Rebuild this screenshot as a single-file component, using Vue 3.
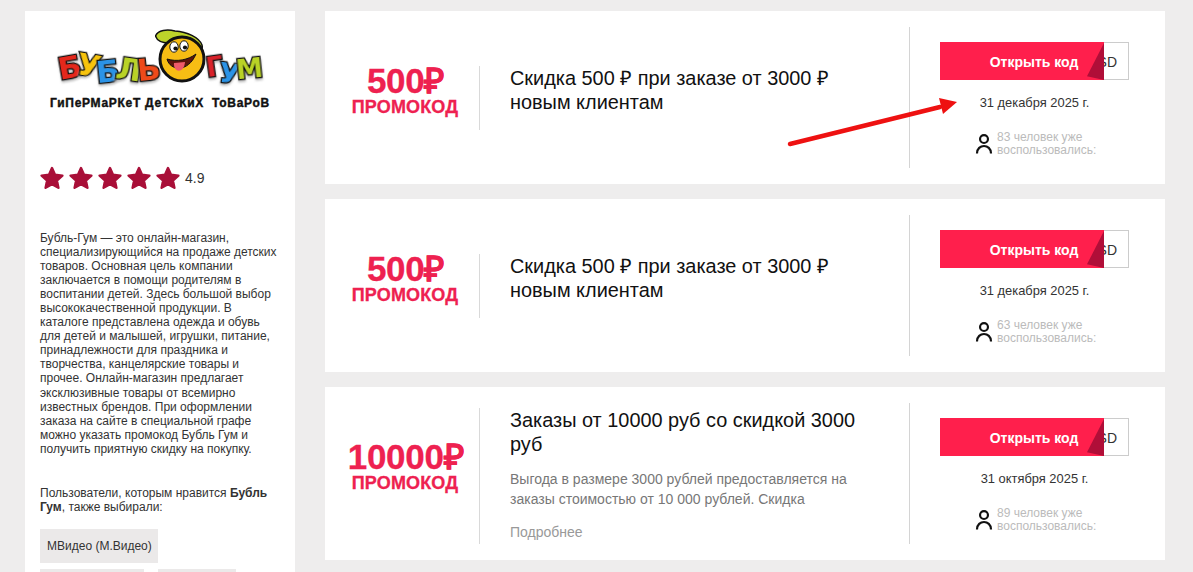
<script setup>
const desc = [
  'Бубль-Гум — это онлайн-магазин,',
  'специализирующийся на продаже детских',
  'товаров. Основная цель компании',
  'заключается в помощи родителям в',
  'воспитании детей. Здесь большой выбор',
  'высококачественной продукции. В',
  'каталоге представлена одежда и обувь',
  'для детей и малышей, игрушки, питание,',
  'принадлежности для праздника и',
  'творчества, канцелярские товары и',
  'прочее. Онлайн-магазин предлагает',
  'эксклюзивные товары от всемирно',
  'известных брендов. При оформлении',
  'заказа на сайте в специальной графе',
  'можно указать промокод Бубль Гум и',
  'получить приятную скидку на покупку.'
]
const logoLeft = [
  { c: 'Б', color: '#e4281c', r: -10, y: 0 },
  { c: 'У', color: '#f7c30c', r: 10, y: -2 },
  { c: 'Б', color: '#2b93e6', r: -6, y: 4 },
  { c: 'Л', color: '#b9d226', r: 8, y: 2 },
  { c: 'Ь', color: '#ee4a1a', r: -6, y: 2 }
]
const logoRight = [
  { c: 'Г', color: '#d8222a', r: -8, y: -2 },
  { c: 'У', color: '#2b93e6', r: 8, y: 5 },
  { c: 'М', color: '#b9d226', r: -6, y: 0 }
]
const coupons = [
  { amount: '500₽', title: ['Скидка 500 ₽ при заказе от 3000 ₽', 'новым клиентам'], date: '31 декабря 2025 г.', used: 83 },
  { amount: '500₽', title: ['Скидка 500 ₽ при заказе от 3000 ₽', 'новым клиентам'], date: '31 декабря 2025 г.', used: 63 },
  {
    amount: '10000₽',
    title: ['Заказы от 10000 руб со скидкой 3000', 'руб'],
    text: ['Выгода в размере 3000 рублей предоставляется на', 'заказы стоимостью от 10 000 рублей. Скидка'],
    more: 'Подробнее',
    date: '31 октября 2025 г.',
    used: 89
  }
]
const letterStyle = (l) => ({ color: l.color, transform: `translateY(${l.y}px) rotate(${l.r}deg)` })
</script>

<template>
  <div class="page">
    <aside class="side">
      <div class="logo">
        <div class="logo-row">
          <span v-for="(l, i) in logoLeft" :key="i" class="logo-l" :style="letterStyle(l)">{{ l.c }}</span>
          <svg class="smiley" width="52" height="56" viewBox="0 0 52 56">
            <path d="M0.5 7 C3 1 12 0 20 2 C32 3 44 8 47 16 C48 20 46 23 43 24 L14 14 C8 14 2 12 .5 7 Z" fill="#bdd32a" stroke="#111" stroke-width="1.5"/>
            <circle cx="27" cy="30" r="22" fill="#f7bd14" stroke="#111" stroke-width="3"/>
            <ellipse cx="19" cy="18" rx="4.2" ry="5.2" fill="#fff" stroke="#111"/>
            <ellipse cx="29" cy="17" rx="4.2" ry="5.2" fill="#fff" stroke="#111"/>
            <circle cx="20.5" cy="19.5" r="2.1" fill="#111"/>
            <circle cx="30" cy="18.5" r="2.1" fill="#111"/>
            <path d="M12 30 C15 42 33 44 41 25 C33 31 22 33 12 30 Z" fill="#5c140c" stroke="#111"/>
            <path d="M19 34 C18 44 29 45 30 33 Z" fill="#ee5a6a"/>
          </svg>
          <span v-for="(l, i) in logoRight" :key="i" class="logo-l logo-s" :style="letterStyle(l)">{{ l.c }}</span>
        </div>
        <div class="logo-sub">ГиПеРМаРКеТ ДеТСКиХ&nbsp; ТоВаРоВ</div>
      </div>
      <div class="rating">
        <svg v-for="i in 5" :key="i" class="star" width="24" height="24" viewBox="0 0 24 24">
          <path d="M12 2 L15 8.8 L22.4 9.6 L16.9 14.6 L18.4 21.8 L12 18.1 L5.6 21.8 L7.1 14.6 L1.6 9.6 L9 8.8 Z" fill="#a90f38" stroke="#a90f38" stroke-width="2.4" stroke-linejoin="round"/>
        </svg>
        <span class="score">4.9</span>
      </div>
      <p class="desc"><template v-for="line in desc" :key="line">{{ line }}<br></template></p>
      <p class="also">Пользователи, которым нравится <b>Бубль<br>Гум</b>, также выбирали:</p>
      <div class="chips">
        <span class="chip chip-a">МВидео (М.Видео)</span>
        <span class="chip chip-b"></span>
        <span class="chip chip-c"></span>
      </div>
    </aside>
    <main class="list">
      <article v-for="(c, i) in coupons" :key="i" class="card">
        <div class="amount-col">
          <div class="amount">{{ c.amount }}</div>
          <div class="promo">ПРОМОКОД</div>
        </div>
        <div class="body" :class="{ tall: c.text }">
          <h2 class="title">{{ c.title[0] }}<br>{{ c.title[1] }}</h2>
          <p v-if="c.text" class="text">{{ c.text[0] }}<br>{{ c.text[1] }}</p>
          <a v-if="c.more" class="more">{{ c.more }}</a>
        </div>
        <div class="action">
          <div class="btn-wrap">
            <span class="code">SD</span>
            <span class="btn">Открыть код</span>
            <span class="fold"></span>
          </div>
          <div class="date">{{ c.date }}</div>
          <div class="used">
            <svg width="18" height="22" viewBox="0 0 20 24" class="person">
              <circle cx="10" cy="6.5" r="4.4" fill="none" stroke="#111" stroke-width="2.4"/>
              <path d="M2.2 22.5 C2.2 11.5 17.8 11.5 17.8 22.5" fill="none" stroke="#111" stroke-width="2.4"/>
            </svg>
            <span>{{ c.used }} человек уже<br>воспользовались:</span>
          </div>
        </div>
      </article>
      <svg class="arrow" width="180" height="60" viewBox="0 0 180 60">
        <path d="M5 55 L155 18" stroke="#ee1111" stroke-width="4.5" stroke-linecap="round"/>
        <path d="M154 9 L172 13 L158 25 Z" fill="#ee1111"/>
      </svg>
    </main>
  </div>
</template>

<style>
html, body { margin: 0; overflow: hidden; background: #eeeded; }
</style>

<style scoped>
.page {
  height: 561px;
  overflow: hidden;
  display: flex;
  gap: 30px;
  padding: 11px 28px 0 25px;
  background: #eeeded;
  font-family: "Liberation Sans", Arial, sans-serif;
  color: #333;
}
.side {
  width: 270px;
  flex: none;
  box-sizing: border-box;
  height: 600px;
  padding: 0 15px;
  background: #fff;
}
.logo { height: 102px; padding-top: 18px; box-sizing: border-box; text-align: center; }
.logo-row { display: flex; align-items: flex-end; justify-content: center; height: 56px; }
.logo-l {
  display: inline-block;
  font: 700 31px/1 "DejaVu Sans", sans-serif;
  -webkit-text-stroke: 2.6px #111;
  paint-order: stroke fill;
  margin: 0 -2.2px 2px;
  filter: drop-shadow(0 2px 1px #bbb);
}
.logo-s { font-size: 27px; margin-bottom: 3px; }
.smiley { margin: 0 1px 0 -3px; flex: none; }
.logo-sub {
  margin: 11px -6px 0;
  font: 700 12px/14px "Liberation Sans", sans-serif;
  letter-spacing: .7px;
  -webkit-text-stroke: .4px #111;
  color: #111;
  white-space: nowrap;
}
.rating { display: flex; align-items: center; height: 24px; margin-top: 53px; }
.star { margin-right: 5px; flex: none; }
.star:nth-child(5) { margin-right: 3px; }
.score { font-size: 14px; color: #333; margin-left: 2px; }
.desc { margin: 41px 0 0; font-size: 12px; line-height: 14.05px; white-space: nowrap; }
.also { margin: 30px 0 0; font-size: 12px; line-height: 14.5px; }
.chips { display: flex; flex-wrap: wrap; gap: 6px 14px; margin-top: 14px; }
.chip { height: 34px; box-sizing: border-box; padding: 0 7px; background: #ebe9e9; font-size: 12px; line-height: 34px; color: #333; white-space: nowrap; }
.chip-a { width: 118px; margin-right: 60px; }
.chip-b { width: 104px; }
.chip-c { width: 78px; }
.list { position: relative; flex: 1; display: flex; flex-direction: column; gap: 15px; }
.card { height: 173px; flex: none; display: flex; align-items: stretch; background: #fff; }
.amount-col { width: 154px; flex: none; display: flex; flex-direction: column; align-items: center; justify-content: center; color: #ee2150; padding-bottom: 15px; box-sizing: border-box; }
.amount { font-size: 35px; line-height: 31px; font-weight: 700; letter-spacing: -.3px; margin-left: 7px; -webkit-text-stroke: .3px #ee2150; }
.promo { font-size: 18px; line-height: 18px; font-weight: 700; letter-spacing: .15px; margin-top: 2px; margin-left: 6px; -webkit-text-stroke: .3px #ee2150; }
.body { position: relative; flex: 1; padding: 55px 20px 0 31px; }
.body::before { content: ""; position: absolute; left: 0; top: 55px; height: 64px; width: 1px; background: #d9d9d9; }
.body.tall { padding-top: 21px; }
.body.tall::before { top: 21px; height: 136px; }
.title { margin: 0; font-size: 19.9px; font-weight: 400; line-height: 24px; color: #111; }
.text { margin: 13px 0 0; font-size: 14px; line-height: 20px; color: #777; }
.more { display: block; margin-top: 13px; font-size: 14px; line-height: 20px; color: #999; }
.action { position: relative; width: 256px; flex: none; box-sizing: border-box; padding: 31px 0 0 31px; }
.action::before { content: ""; position: absolute; left: 0; top: 16px; height: 141px; width: 1px; background: #d4d4d4; }
.btn-wrap { position: relative; width: 189px; height: 38px; }
.code { position: absolute; top: 0; right: 0; box-sizing: border-box; width: 60px; height: 38px; border: 1px solid #ccc; text-align: right; padding-right: 11px; font-size: 14px; line-height: 38px; color: #333; }
.btn { position: absolute; left: 0; top: 0; width: 164px; height: 38px; background: #ff1f4c; color: #fff; font-size: 14px; font-weight: 700; line-height: 41px; text-align: center; padding-left: 24px; box-sizing: border-box; white-space: nowrap; }
.fold { position: absolute; left: 147px; top: 1px; width: 17px; height: 37px; background: #b00e38; clip-path: polygon(100% 0, 0 90%, 100% 100%); }
.date { margin-top: 15px; width: 189px; text-align: center; font-size: 12.9px; line-height: 16px; color: #333; }
.used { display: flex; align-items: center; margin: 20px 0 0 35px; font-size: 12px; line-height: 13px; color: #bbb; white-space: nowrap; }
.person { flex: none; margin-right: 4px; }
.arrow { position: absolute; left: 460px; top: 78px; }
</style>
